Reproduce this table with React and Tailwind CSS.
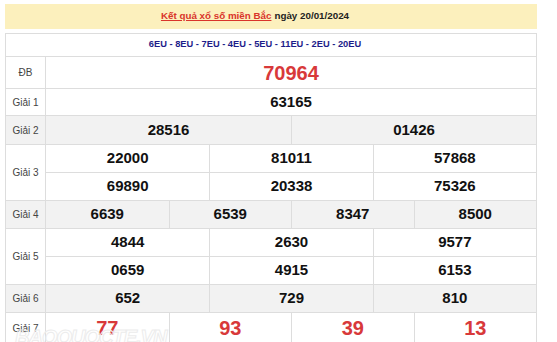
import React from 'react';

const font = { fontFamily: '"Liberation Sans", Arial, sans-serif' };

const Label = ({ children }) => (
  <div className="w-[40px] shrink-0 border-r border-[#ddd] flex items-center justify-center text-[10px] text-[#444]">
    {children}
  </div>
);

const Cells = ({ nums, cols, h = 'h-[27px]', size = 'text-[15px]', color = 'text-[#111]' }) => (
  <div className={`grid ${cols} ${h}`}>
    {nums.map((n, i) => (
      <div
        key={i}
        className={`flex items-center justify-center font-bold ${size} ${color} ${i > 0 ? 'border-l border-[#ddd]' : ''}`}
      >
        {n}
      </div>
    ))}
  </div>
);

const App = () => {
  return (
    <div className="relative w-[557px] h-[342px] overflow-hidden bg-white" style={font}>
      <div className="ml-[5px] pt-[4px] w-[532px]">
        <div className="h-[25px] pr-[32px] bg-[#fcf0bd] flex items-center justify-center text-[9.8px] font-bold">
          <span className="text-[#d9352b] underline">Kết quả xổ số miền Bắc</span>
          <span className="text-[#222] ml-[3px]">ngày 20/01/2024</span>
        </div>

        <div className="mt-[4px] border border-[#ddd]">
          <div className="h-[22px] pr-[32px] flex items-center justify-center text-[9.3px] font-bold text-[#1d1d8a]">
            6EU - 8EU - 7EU - 4EU - 5EU - 11EU - 2EU - 20EU
          </div>

          <div className="flex border-t border-[#ddd] h-[32px]">
            <Label>ĐB</Label>
            <div className="flex-1 flex items-center justify-center text-[20px] font-bold text-[#d8393a]">70964</div>
          </div>

          <div className="flex border-t border-[#ddd] h-[27px]">
            <Label>Giải 1</Label>
            <div className="flex-1 flex items-center justify-center text-[15px] font-bold text-[#111]">63165</div>
          </div>

          <div className="flex border-t border-[#ddd] bg-[#f2f2f2]">
            <Label>Giải 2</Label>
            <div className="flex-1">
              <Cells nums={['28516', '01426']} cols="grid-cols-2" h="h-[28px]" />
            </div>
          </div>

          <div className="flex border-t border-[#ddd]">
            <Label>Giải 3</Label>
            <div className="flex-1">
              <Cells nums={['22000', '81011', '57868']} cols="grid-cols-3" />
              <div className="border-t border-[#ddd]">
                <Cells nums={['69890', '20338', '75326']} cols="grid-cols-3" />
              </div>
            </div>
          </div>

          <div className="flex border-t border-[#ddd] bg-[#f2f2f2]">
            <Label>Giải 4</Label>
            <div className="flex-1">
              <Cells nums={['6639', '6539', '8347', '8500']} cols="grid-cols-4" />
            </div>
          </div>

          <div className="flex border-t border-[#ddd]">
            <Label>Giải 5</Label>
            <div className="flex-1">
              <Cells nums={['4844', '2630', '9577']} cols="grid-cols-3" />
              <div className="border-t border-[#ddd]">
                <Cells nums={['0659', '4915', '6153']} cols="grid-cols-3" />
              </div>
            </div>
          </div>

          <div className="flex border-t border-[#ddd] bg-[#f2f2f2]">
            <Label>Giải 6</Label>
            <div className="flex-1">
              <Cells nums={['652', '729', '810']} cols="grid-cols-3" />
            </div>
          </div>

          <div className="flex border-t border-[#ddd]">
            <Label>Giải 7</Label>
            <div className="flex-1">
              <Cells
                nums={['77', '93', '39', '13']}
                cols="grid-cols-4"
                h="h-[30px]"
                size="text-[20px]"
                color="text-[#d8393a]"
              />
            </div>
          </div>
        </div>
      </div>

      <div className="absolute left-[15px] top-[322px] text-[20px] font-bold italic tracking-[-1px] text-transparent [-webkit-text-stroke:1px_#ececec] pointer-events-none">
        BAOQUOCTE.VN
      </div>
    </div>
  );
};

export default App;
